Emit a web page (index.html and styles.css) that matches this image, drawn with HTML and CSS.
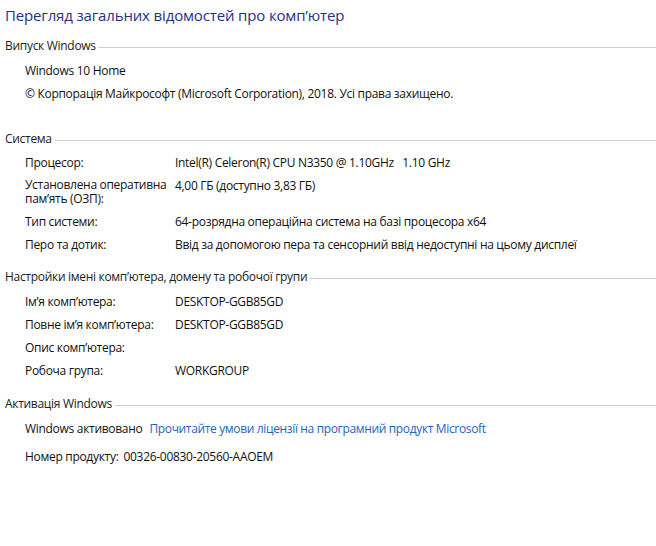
FILE: index.html
```html
<!DOCTYPE html>
<html lang="uk">
<head>
<meta charset="utf-8">
<title>Система</title>
<link rel="stylesheet" href="styles.css">
</head>
<body>
<div class="page">
  <h1 class="title">Перегляд загальних відомостей про комп’ютер</h1>

  <section class="section s-edition">
    <div class="head"><span>Випуск Windows</span><i class="rule"></i></div>
    <div class="items">
      <div class="item">Windows 10 Home</div>
      <div class="item">© Корпорація Майкрософт (Microsoft Corporation), 2018. Усі права захищено.</div>
    </div>
  </section>

  <section class="section">
    <div class="head"><span>Система</span><i class="rule"></i></div>
    <div class="grid">
      <div class="lbl">Процесор:</div><div class="val">Intel(R) Celeron(R) CPU N3350 @ 1.10GHz&nbsp;&nbsp; 1.10 GHz</div>
      <div class="lbl lbl-2">Установлена оперативна пам’ять (ОЗП):</div><div class="val">4,00 ГБ (доступно 3,83 ГБ)</div>
      <div class="lbl">Тип системи:</div><div class="val">64-розрядна операційна система на базі процесора x64</div>
      <div class="lbl">Перо та дотик:</div><div class="val">Ввід за допомогою пера та сенсорний ввід недоступні на цьому дисплеї</div>
    </div>
  </section>

  <section class="section s-name">
    <div class="head"><span>Настройки імені комп’ютера, домену та робочої групи</span><i class="rule"></i></div>
    <div class="grid grid-name">
      <div class="lbl">Ім’я комп’ютера:</div><div class="val">DESKTOP-GGB85GD</div>
      <div class="lbl">Повне ім’я комп’ютера:</div><div class="val">DESKTOP-GGB85GD</div>
      <div class="lbl">Опис комп’ютера:</div><div class="val"></div>
      <div class="lbl">Робоча група:</div><div class="val">WORKGROUP</div>
    </div>
  </section>

  <section class="section s-act">
    <div class="head"><span>Активація Windows</span><i class="rule"></i></div>
    <div class="items act">
      <div class="item"><span class="status">Windows активовано</span><a class="link" href="#">Прочитайте умови ліцензії на програмний продукт Microsoft</a></div>
      <div class="item"><span class="pk-lbl">Номер продукту:</span><span>00326-00830-20560-AAOEM</span></div>
    </div>
  </section>
</div>
</body>
</html>
```

FILE: styles.css
```css
html, body {
  margin: 0;
  padding: 0;
  background: #ffffff;
}

body {
  font-family: "Open Sans", "Noto Sans", "Liberation Sans", sans-serif;
  font-size: 12px;
  letter-spacing: -0.3px;
  color: #111111;
}

.page {
  padding: 6px 0 0 5px;
}

.title {
  margin: 0;
  font-size: 15px;
  letter-spacing: -0.15px;
  font-weight: normal;
  line-height: 18px;
  color: #1e3287;
}

.section {
  margin-top: 19px;
}

.s-edition {
  margin-top: 14px;
  margin-bottom: 30px;
}

.s-name {
  margin-top: 17px;
}

.s-act {
  margin-top: 18px;
}

.head {
  display: flex;
  align-items: center;
  line-height: 15px;
}

.head span {
  color: #222;
}

.rule {
  flex: 1;
  height: 0;
  border-top: 1px solid #cfcfcf;
  margin: 3px 0 0 3px;
}

.items {
  display: flex;
  flex-direction: column;
  gap: 8px;
  padding: 10px 0 0 20px;
  line-height: 15px;
}

.act {
  gap: 13px;
  padding-top: 10px;
}

.grid {
  display: grid;
  grid-template-columns: 150px 1fr;
  row-gap: 8px;
  padding: 9px 0 0 20px;
  line-height: 15px;
}

.grid-name {
  padding-top: 10px;
}

.lbl-2 {
  line-height: 14px;
}

.status {
  margin-right: 7px;
}

.link {
  color: #1a64c4;
  letter-spacing: -0.35px;
  text-decoration: none;
}

.pk-lbl {
  margin-right: 5px;
}
```
